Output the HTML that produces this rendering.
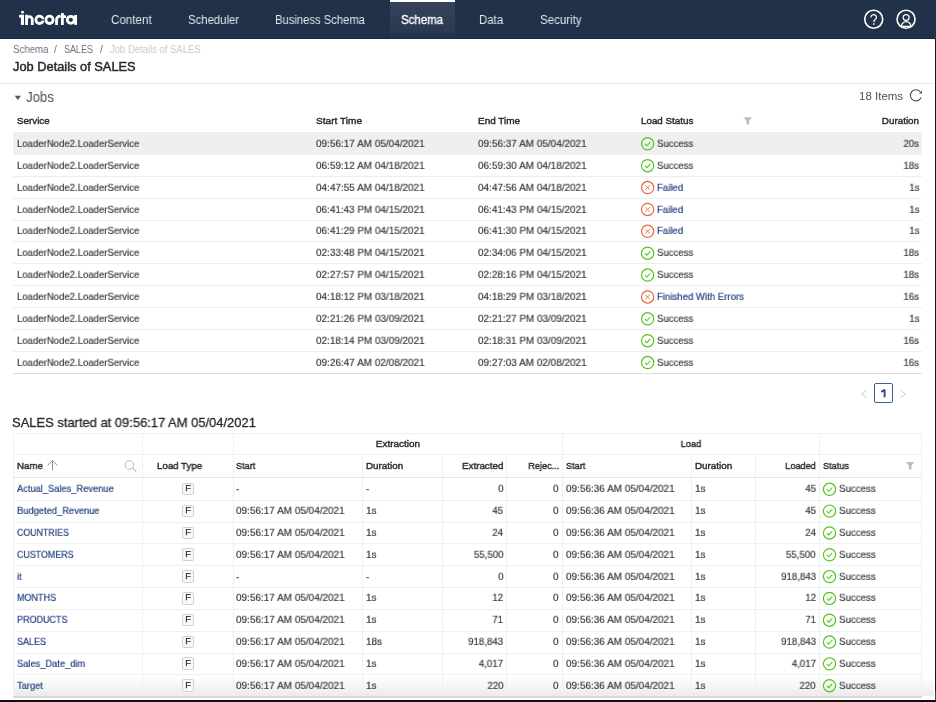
<!DOCTYPE html>
<html><head><meta charset="utf-8"><style>
html,body{margin:0;padding:0;}
body{width:936px;height:702px;position:relative;overflow:hidden;background:#fff;font-family:"Liberation Sans",sans-serif;}
.t{position:absolute;white-space:nowrap;will-change:transform;}
.r{position:absolute;}
</style></head><body>
<div class="r" style="left:0px;top:0px;width:936px;height:38.6px;background:#213149;"></div><div class="r" style="left:0px;top:37.8px;width:936px;height:0.8px;background:#15264a;"></div><div class="r" style="left:390px;top:0px;width:65px;height:38.6px;background:linear-gradient(#36435b,#2a3851 85%,#1c2b48);"></div><div class="r" style="left:390px;top:0px;width:65px;height:2px;background:#ffffff;"></div><svg class="r" style="left:0;top:0" width="90" height="38"><g fill="#fff"><circle cx="22.5" cy="12.15" r="1.45"/><rect x="19.1" y="14.8" width="4.9" height="2.8"/><rect x="20.9" y="14.8" width="3.1" height="10.1"/></g><g fill="none" stroke="#fff" stroke-width="2.8"><path d="M26.55 24.9 V14.8 M26.55 19.5 A2.85 2.85 0 0 1 32.25 19.5 V24.9"/><circle cx="39.5" cy="19.85" r="3.65"/><circle cx="49.5" cy="19.85" r="3.65"/><path d="M56.55 24.9 V19.7 A3.5 3.5 0 0 1 60.1 16.2"/><path d="M62.4 13 V24.9 M60.3 16.6 H66"/><circle cx="70.8" cy="19.85" r="3.55"/><path d="M75.6 15 V24.9"/></g><rect x="39.6" y="19.2" width="5.5" height="1.3" fill="#213149"/></svg><div class="t" style="top:14px;font-size:12px;line-height:12px;font-weight:400;color:#e1e5ec;left:110.82px;transform-origin:0 10px;transform:scale(0.9674,1.0000);">Content</div><div class="t" style="top:14px;font-size:12px;line-height:12px;font-weight:400;color:#e1e5ec;left:187.63px;transform-origin:0 10px;transform:scale(0.9461,1.0000);">Scheduler</div><div class="t" style="top:14px;font-size:12px;line-height:12px;font-weight:400;color:#e1e5ec;left:275.04px;transform-origin:0 10px;transform:scale(0.9362,1.0000);">Business Schema</div><div class="t" style="top:14px;font-size:12px;line-height:12px;font-weight:400;color:#ffffff;left:401.43px;transform-origin:0 10px;transform:scale(0.9572,1.0000);-webkit-text-stroke:0.35px #fff;">Schema</div><div class="t" style="top:14px;font-size:12px;line-height:12px;font-weight:400;color:#e1e5ec;left:479.43px;transform-origin:0 10px;transform:scale(0.9520,1.0000);">Data</div><div class="t" style="top:14px;font-size:12px;line-height:12px;font-weight:400;color:#e1e5ec;left:539.92px;transform-origin:0 10px;transform:scale(0.9606,1.0000);">Security</div><svg class="r" style="left:0;top:0" width="936" height="38"><g fill="none" stroke="#fff" stroke-width="1.6"><circle cx="873.7" cy="19.2" r="9.0"/><circle cx="906.05" cy="19.2" r="9.0"/></g><g fill="none" stroke="#fff" stroke-width="1.25"><path d="M870.9 17.4 A2.75 2.75 0 1 1 875.2 19.6 C874.2 20.2 873.8 20.7 873.8 22.1"/><circle cx="906.15" cy="17.5" r="2.95"/><path d="M901.4 26.4 A4.75 4.75 0 0 1 910.9 26.4 Z"/></g><rect x="873.0" y="23.3" width="1.6" height="1.5" fill="#fff"/></svg><div class="t" style="top:45px;font-size:10px;line-height:10px;font-weight:400;color:#687283;left:12.52px;transform-origin:0 8px;transform:scale(0.9695,1.0000);">Schema</div><div class="t" style="top:45px;font-size:10px;line-height:10px;font-weight:400;color:#687283;left:54.10px;transform-origin:0 8px;">/</div><div class="t" style="top:45px;font-size:10px;line-height:10px;font-weight:400;color:#687283;left:64.45px;transform-origin:0 8px;transform:scale(0.8960,1.0000);">SALES</div><div class="t" style="top:45px;font-size:10px;line-height:10px;font-weight:400;color:#687283;left:99.90px;transform-origin:0 8px;">/</div><div class="t" style="top:45px;font-size:10px;line-height:10px;font-weight:400;color:#c5c9d0;left:110.43px;transform-origin:0 8px;transform:scale(0.9481,1.0000);">Job Details of SALES</div><div class="t" style="top:61px;font-size:12.6px;line-height:12.6px;font-weight:400;color:#25282d;left:13.36px;transform-origin:0 10px;transform:scale(1.0189,1.0000);-webkit-text-stroke:0.45px #25282d;">Job Details of SALES</div><div class="r" style="left:0px;top:83px;width:934px;height:1px;background:#e8e9eb;"></div><svg class="r" style="left:0;top:0" width="936" height="702"><path d="M14.7 95.7 H21 L17.85 99.9 Z" fill="#50565f"/></svg><div class="t" style="top:91px;font-size:13.8px;line-height:13.8px;font-weight:400;color:#4c525b;left:25.54px;transform-origin:0 11px;transform:scale(0.9577,1.0000);">Jobs</div><div class="t" style="top:91px;font-size:11.5px;line-height:11.5px;font-weight:400;color:#4c525b;right:32.92px;transform-origin:100% 9px;">18 Items</div><svg class="r" style="left:0;top:0" width="936" height="702"><path d="M921.2 97.4 A5.6 5.6 0 1 1 920.2 91.6" fill="none" stroke="#4c525b" stroke-width="1.15"/><path d="M922.0 90.5 L922.0 93.6 L918.9 93.6 Z" fill="#4c525b"/></svg><div class="t" style="top:116px;font-size:9.8px;line-height:9.8px;font-weight:400;color:#26292e;left:16.61px;transform-origin:0 8px;transform:scale(0.9971,1.0000);-webkit-text-stroke:0.4px #26292e;">Service</div><div class="t" style="top:116px;font-size:9.8px;line-height:9.8px;font-weight:400;color:#26292e;left:315.90px;transform-origin:0 8px;transform:scale(1.0303,1.0000);-webkit-text-stroke:0.4px #26292e;">Start Time</div><div class="t" style="top:116px;font-size:9.8px;line-height:9.8px;font-weight:400;color:#26292e;left:478.30px;transform-origin:0 8px;transform:scale(1.0146,1.0000);-webkit-text-stroke:0.4px #26292e;">End Time</div><div class="t" style="top:116px;font-size:9.8px;line-height:9.8px;font-weight:400;color:#26292e;left:641.01px;transform-origin:0 8px;-webkit-text-stroke:0.4px #26292e;">Load Status</div><div class="t" style="top:116px;font-size:9.8px;line-height:9.8px;font-weight:400;color:#26292e;right:16.81px;transform-origin:100% 8px;transform:scale(1.0041,1.0000);-webkit-text-stroke:0.4px #26292e;">Duration</div><svg class="r" style="left:0;top:0" width="936" height="702"><path d="M743.5 117.3 H752 L749 120.9 V124.6 H746.5 V120.9 Z" fill="#bcbcbc"/></svg><div class="r" style="left:13px;top:132.3px;width:909px;height:22.6px;background:#eeeff1;"></div><div class="t" style="top:139px;font-size:10.0px;line-height:10.0px;font-weight:400;color:#363a40;left:17.12px;transform-origin:0 8px;transform:scale(0.9568,0.9100);-webkit-text-stroke:0.2px;">LoaderNode2.LoaderService</div><div class="t" style="top:139px;font-size:10.0px;line-height:10.0px;font-weight:400;color:#363a40;left:315.90px;transform-origin:0 8px;transform:scale(0.9964,0.9100);-webkit-text-stroke:0.2px;">09:56:17 AM 05/04/2021</div><div class="t" style="top:139px;font-size:10.0px;line-height:10.0px;font-weight:400;color:#363a40;left:478.30px;transform-origin:0 8px;transform:scale(0.9964,0.9100);-webkit-text-stroke:0.2px;">09:56:37 AM 05/04/2021</div><div class="t" style="top:139px;font-size:10.0px;line-height:10.0px;font-weight:400;color:#363a40;left:657.22px;transform-origin:0 8px;transform:scale(0.9600,0.9100);-webkit-text-stroke:0.2px;">Success</div><div class="t" style="top:139px;font-size:10.0px;line-height:10.0px;font-weight:400;color:#363a40;right:16.80px;transform-origin:100% 8px;transform:scale(0.9700,0.9100);-webkit-text-stroke:0.2px;">20s</div><div class="t" style="top:161px;font-size:10.0px;line-height:10.0px;font-weight:400;color:#363a40;left:17.12px;transform-origin:0 8px;transform:scale(0.9568,0.9100);-webkit-text-stroke:0.2px;">LoaderNode2.LoaderService</div><div class="t" style="top:161px;font-size:10.0px;line-height:10.0px;font-weight:400;color:#363a40;left:315.90px;transform-origin:0 8px;transform:scale(0.9964,0.9100);-webkit-text-stroke:0.2px;">06:59:12 AM 04/18/2021</div><div class="t" style="top:161px;font-size:10.0px;line-height:10.0px;font-weight:400;color:#363a40;left:478.30px;transform-origin:0 8px;transform:scale(0.9964,0.9100);-webkit-text-stroke:0.2px;">06:59:30 AM 04/18/2021</div><div class="t" style="top:161px;font-size:10.0px;line-height:10.0px;font-weight:400;color:#363a40;left:657.22px;transform-origin:0 8px;transform:scale(0.9600,0.9100);-webkit-text-stroke:0.2px;">Success</div><div class="t" style="top:161px;font-size:10.0px;line-height:10.0px;font-weight:400;color:#363a40;right:16.80px;transform-origin:100% 8px;transform:scale(0.9700,0.9100);-webkit-text-stroke:0.2px;">18s</div><div class="r" style="left:13px;top:175.85px;width:909px;height:1px;background:#ebedf0;"></div><div class="t" style="top:183px;font-size:10.0px;line-height:10.0px;font-weight:400;color:#363a40;left:17.12px;transform-origin:0 8px;transform:scale(0.9568,0.9100);-webkit-text-stroke:0.2px;">LoaderNode2.LoaderService</div><div class="t" style="top:183px;font-size:10.0px;line-height:10.0px;font-weight:400;color:#363a40;left:315.90px;transform-origin:0 8px;transform:scale(0.9964,0.9100);-webkit-text-stroke:0.2px;">04:47:55 AM 04/18/2021</div><div class="t" style="top:183px;font-size:10.0px;line-height:10.0px;font-weight:400;color:#363a40;left:478.30px;transform-origin:0 8px;transform:scale(0.9964,0.9100);-webkit-text-stroke:0.2px;">04:47:56 AM 04/18/2021</div><div class="t" style="top:183px;font-size:10.0px;line-height:10.0px;font-weight:400;color:#1f3d7c;left:657.22px;transform-origin:0 8px;transform:scale(0.9600,0.9100);-webkit-text-stroke:0.2px;">Failed</div><div class="t" style="top:183px;font-size:10.0px;line-height:10.0px;font-weight:400;color:#363a40;right:16.80px;transform-origin:100% 8px;transform:scale(0.9700,0.9100);-webkit-text-stroke:0.2px;">1s</div><div class="r" style="left:13px;top:197.725px;width:909px;height:1px;background:#ebedf0;"></div><div class="t" style="top:205px;font-size:10.0px;line-height:10.0px;font-weight:400;color:#363a40;left:17.12px;transform-origin:0 8px;transform:scale(0.9568,0.9100);-webkit-text-stroke:0.2px;">LoaderNode2.LoaderService</div><div class="t" style="top:205px;font-size:10.0px;line-height:10.0px;font-weight:400;color:#363a40;left:315.90px;transform-origin:0 8px;transform:scale(0.9914,0.9100);-webkit-text-stroke:0.2px;">06:41:43 PM 04/15/2021</div><div class="t" style="top:205px;font-size:10.0px;line-height:10.0px;font-weight:400;color:#363a40;left:478.30px;transform-origin:0 8px;transform:scale(0.9914,0.9100);-webkit-text-stroke:0.2px;">06:41:43 PM 04/15/2021</div><div class="t" style="top:205px;font-size:10.0px;line-height:10.0px;font-weight:400;color:#1f3d7c;left:657.22px;transform-origin:0 8px;transform:scale(0.9600,0.9100);-webkit-text-stroke:0.2px;">Failed</div><div class="t" style="top:205px;font-size:10.0px;line-height:10.0px;font-weight:400;color:#363a40;right:16.80px;transform-origin:100% 8px;transform:scale(0.9700,0.9100);-webkit-text-stroke:0.2px;">1s</div><div class="r" style="left:13px;top:219.6px;width:909px;height:1px;background:#ebedf0;"></div><div class="t" style="top:226px;font-size:10.0px;line-height:10.0px;font-weight:400;color:#363a40;left:17.12px;transform-origin:0 8px;transform:scale(0.9568,0.9100);-webkit-text-stroke:0.2px;">LoaderNode2.LoaderService</div><div class="t" style="top:226px;font-size:10.0px;line-height:10.0px;font-weight:400;color:#363a40;left:315.90px;transform-origin:0 8px;transform:scale(0.9914,0.9100);-webkit-text-stroke:0.2px;">06:41:29 PM 04/15/2021</div><div class="t" style="top:226px;font-size:10.0px;line-height:10.0px;font-weight:400;color:#363a40;left:478.30px;transform-origin:0 8px;transform:scale(0.9914,0.9100);-webkit-text-stroke:0.2px;">06:41:30 PM 04/15/2021</div><div class="t" style="top:226px;font-size:10.0px;line-height:10.0px;font-weight:400;color:#1f3d7c;left:657.22px;transform-origin:0 8px;transform:scale(0.9600,0.9100);-webkit-text-stroke:0.2px;">Failed</div><div class="t" style="top:226px;font-size:10.0px;line-height:10.0px;font-weight:400;color:#363a40;right:16.80px;transform-origin:100% 8px;transform:scale(0.9700,0.9100);-webkit-text-stroke:0.2px;">1s</div><div class="r" style="left:13px;top:241.475px;width:909px;height:1px;background:#ebedf0;"></div><div class="t" style="top:248px;font-size:10.0px;line-height:10.0px;font-weight:400;color:#363a40;left:17.12px;transform-origin:0 8px;transform:scale(0.9568,0.9100);-webkit-text-stroke:0.2px;">LoaderNode2.LoaderService</div><div class="t" style="top:248px;font-size:10.0px;line-height:10.0px;font-weight:400;color:#363a40;left:315.90px;transform-origin:0 8px;transform:scale(0.9914,0.9100);-webkit-text-stroke:0.2px;">02:33:48 PM 04/15/2021</div><div class="t" style="top:248px;font-size:10.0px;line-height:10.0px;font-weight:400;color:#363a40;left:478.30px;transform-origin:0 8px;transform:scale(0.9914,0.9100);-webkit-text-stroke:0.2px;">02:34:06 PM 04/15/2021</div><div class="t" style="top:248px;font-size:10.0px;line-height:10.0px;font-weight:400;color:#363a40;left:657.22px;transform-origin:0 8px;transform:scale(0.9600,0.9100);-webkit-text-stroke:0.2px;">Success</div><div class="t" style="top:248px;font-size:10.0px;line-height:10.0px;font-weight:400;color:#363a40;right:16.80px;transform-origin:100% 8px;transform:scale(0.9700,0.9100);-webkit-text-stroke:0.2px;">18s</div><div class="r" style="left:13px;top:263.35px;width:909px;height:1px;background:#ebedf0;"></div><div class="t" style="top:270px;font-size:10.0px;line-height:10.0px;font-weight:400;color:#363a40;left:17.12px;transform-origin:0 8px;transform:scale(0.9568,0.9100);-webkit-text-stroke:0.2px;">LoaderNode2.LoaderService</div><div class="t" style="top:270px;font-size:10.0px;line-height:10.0px;font-weight:400;color:#363a40;left:315.90px;transform-origin:0 8px;transform:scale(0.9914,0.9100);-webkit-text-stroke:0.2px;">02:27:57 PM 04/15/2021</div><div class="t" style="top:270px;font-size:10.0px;line-height:10.0px;font-weight:400;color:#363a40;left:478.30px;transform-origin:0 8px;transform:scale(0.9914,0.9100);-webkit-text-stroke:0.2px;">02:28:16 PM 04/15/2021</div><div class="t" style="top:270px;font-size:10.0px;line-height:10.0px;font-weight:400;color:#363a40;left:657.22px;transform-origin:0 8px;transform:scale(0.9600,0.9100);-webkit-text-stroke:0.2px;">Success</div><div class="t" style="top:270px;font-size:10.0px;line-height:10.0px;font-weight:400;color:#363a40;right:16.80px;transform-origin:100% 8px;transform:scale(0.9700,0.9100);-webkit-text-stroke:0.2px;">18s</div><div class="r" style="left:13px;top:285.225px;width:909px;height:1px;background:#ebedf0;"></div><div class="t" style="top:292px;font-size:10.0px;line-height:10.0px;font-weight:400;color:#363a40;left:17.12px;transform-origin:0 8px;transform:scale(0.9568,0.9100);-webkit-text-stroke:0.2px;">LoaderNode2.LoaderService</div><div class="t" style="top:292px;font-size:10.0px;line-height:10.0px;font-weight:400;color:#363a40;left:315.90px;transform-origin:0 8px;transform:scale(0.9914,0.9100);-webkit-text-stroke:0.2px;">04:18:12 PM 03/18/2021</div><div class="t" style="top:292px;font-size:10.0px;line-height:10.0px;font-weight:400;color:#363a40;left:478.30px;transform-origin:0 8px;transform:scale(0.9914,0.9100);-webkit-text-stroke:0.2px;">04:18:29 PM 03/18/2021</div><div class="t" style="top:292px;font-size:10.0px;line-height:10.0px;font-weight:400;color:#1f3d7c;left:657.22px;transform-origin:0 8px;transform:scale(0.9600,0.9100);-webkit-text-stroke:0.2px;">Finished With Errors</div><div class="t" style="top:292px;font-size:10.0px;line-height:10.0px;font-weight:400;color:#363a40;right:16.80px;transform-origin:100% 8px;transform:scale(0.9700,0.9100);-webkit-text-stroke:0.2px;">16s</div><div class="r" style="left:13px;top:307.1px;width:909px;height:1px;background:#ebedf0;"></div><div class="t" style="top:314px;font-size:10.0px;line-height:10.0px;font-weight:400;color:#363a40;left:17.12px;transform-origin:0 8px;transform:scale(0.9568,0.9100);-webkit-text-stroke:0.2px;">LoaderNode2.LoaderService</div><div class="t" style="top:314px;font-size:10.0px;line-height:10.0px;font-weight:400;color:#363a40;left:315.90px;transform-origin:0 8px;transform:scale(0.9914,0.9100);-webkit-text-stroke:0.2px;">02:21:26 PM 03/09/2021</div><div class="t" style="top:314px;font-size:10.0px;line-height:10.0px;font-weight:400;color:#363a40;left:478.30px;transform-origin:0 8px;transform:scale(0.9914,0.9100);-webkit-text-stroke:0.2px;">02:21:27 PM 03/09/2021</div><div class="t" style="top:314px;font-size:10.0px;line-height:10.0px;font-weight:400;color:#363a40;left:657.22px;transform-origin:0 8px;transform:scale(0.9600,0.9100);-webkit-text-stroke:0.2px;">Success</div><div class="t" style="top:314px;font-size:10.0px;line-height:10.0px;font-weight:400;color:#363a40;right:16.80px;transform-origin:100% 8px;transform:scale(0.9700,0.9100);-webkit-text-stroke:0.2px;">1s</div><div class="r" style="left:13px;top:328.975px;width:909px;height:1px;background:#ebedf0;"></div><div class="t" style="top:336px;font-size:10.0px;line-height:10.0px;font-weight:400;color:#363a40;left:17.12px;transform-origin:0 8px;transform:scale(0.9568,0.9100);-webkit-text-stroke:0.2px;">LoaderNode2.LoaderService</div><div class="t" style="top:336px;font-size:10.0px;line-height:10.0px;font-weight:400;color:#363a40;left:315.90px;transform-origin:0 8px;transform:scale(0.9914,0.9100);-webkit-text-stroke:0.2px;">02:18:14 PM 03/09/2021</div><div class="t" style="top:336px;font-size:10.0px;line-height:10.0px;font-weight:400;color:#363a40;left:478.30px;transform-origin:0 8px;transform:scale(0.9914,0.9100);-webkit-text-stroke:0.2px;">02:18:31 PM 03/09/2021</div><div class="t" style="top:336px;font-size:10.0px;line-height:10.0px;font-weight:400;color:#363a40;left:657.22px;transform-origin:0 8px;transform:scale(0.9600,0.9100);-webkit-text-stroke:0.2px;">Success</div><div class="t" style="top:336px;font-size:10.0px;line-height:10.0px;font-weight:400;color:#363a40;right:16.80px;transform-origin:100% 8px;transform:scale(0.9700,0.9100);-webkit-text-stroke:0.2px;">16s</div><div class="r" style="left:13px;top:350.85px;width:909px;height:1px;background:#ebedf0;"></div><div class="t" style="top:358px;font-size:10.0px;line-height:10.0px;font-weight:400;color:#363a40;left:17.12px;transform-origin:0 8px;transform:scale(0.9568,0.9100);-webkit-text-stroke:0.2px;">LoaderNode2.LoaderService</div><div class="t" style="top:358px;font-size:10.0px;line-height:10.0px;font-weight:400;color:#363a40;left:315.90px;transform-origin:0 8px;transform:scale(0.9964,0.9100);-webkit-text-stroke:0.2px;">09:26:47 AM 02/08/2021</div><div class="t" style="top:358px;font-size:10.0px;line-height:10.0px;font-weight:400;color:#363a40;left:478.30px;transform-origin:0 8px;transform:scale(0.9964,0.9100);-webkit-text-stroke:0.2px;">09:27:03 AM 02/08/2021</div><div class="t" style="top:358px;font-size:10.0px;line-height:10.0px;font-weight:400;color:#363a40;left:657.22px;transform-origin:0 8px;transform:scale(0.9600,0.9100);-webkit-text-stroke:0.2px;">Success</div><div class="t" style="top:358px;font-size:10.0px;line-height:10.0px;font-weight:400;color:#363a40;right:16.80px;transform-origin:100% 8px;transform:scale(0.9700,0.9100);-webkit-text-stroke:0.2px;">16s</div><div class="r" style="left:13px;top:372.625px;width:909px;height:1.5px;background:#dfdcd6;"></div><svg class="r" style="left:0;top:0" width="936" height="702"><circle cx="647.60" cy="143.80" r="6.1" fill="none" stroke="#52c41a" stroke-width="1.2"/><path d="M644.90 143.90 L646.80 145.80 L650.40 142.00" fill="none" stroke="#52c41a" stroke-width="1.05"/><circle cx="647.60" cy="165.68" r="6.1" fill="none" stroke="#52c41a" stroke-width="1.2"/><path d="M644.90 165.78 L646.80 167.68 L650.40 163.88" fill="none" stroke="#52c41a" stroke-width="1.05"/><circle cx="647.60" cy="187.55" r="6.1" fill="none" stroke="#e8683d" stroke-width="1.2"/><path d="M645.40 185.35 L649.80 189.75 M649.80 185.35 L645.40 189.75" fill="none" stroke="#e8683d" stroke-width="0.9"/><circle cx="647.60" cy="209.43" r="6.1" fill="none" stroke="#e8683d" stroke-width="1.2"/><path d="M645.40 207.23 L649.80 211.62 M649.80 207.23 L645.40 211.62" fill="none" stroke="#e8683d" stroke-width="0.9"/><circle cx="647.60" cy="231.30" r="6.1" fill="none" stroke="#e8683d" stroke-width="1.2"/><path d="M645.40 229.10 L649.80 233.50 M649.80 229.10 L645.40 233.50" fill="none" stroke="#e8683d" stroke-width="0.9"/><circle cx="647.60" cy="253.18" r="6.1" fill="none" stroke="#52c41a" stroke-width="1.2"/><path d="M644.90 253.28 L646.80 255.18 L650.40 251.38" fill="none" stroke="#52c41a" stroke-width="1.05"/><circle cx="647.60" cy="275.05" r="6.1" fill="none" stroke="#52c41a" stroke-width="1.2"/><path d="M644.90 275.15 L646.80 277.05 L650.40 273.25" fill="none" stroke="#52c41a" stroke-width="1.05"/><circle cx="647.60" cy="296.93" r="6.1" fill="none" stroke="#e8683d" stroke-width="1.2"/><path d="M645.40 294.73 L649.80 299.12 M649.80 294.73 L645.40 299.12" fill="none" stroke="#e8683d" stroke-width="0.9"/><circle cx="647.60" cy="318.80" r="6.1" fill="none" stroke="#52c41a" stroke-width="1.2"/><path d="M644.90 318.90 L646.80 320.80 L650.40 317.00" fill="none" stroke="#52c41a" stroke-width="1.05"/><circle cx="647.60" cy="340.68" r="6.1" fill="none" stroke="#52c41a" stroke-width="1.2"/><path d="M644.90 340.78 L646.80 342.68 L650.40 338.88" fill="none" stroke="#52c41a" stroke-width="1.05"/><circle cx="647.60" cy="362.55" r="6.1" fill="none" stroke="#52c41a" stroke-width="1.2"/><path d="M644.90 362.65 L646.80 364.55 L650.40 360.75" fill="none" stroke="#52c41a" stroke-width="1.05"/></svg><div class="r" style="left:874px;top:383px;width:19.3px;height:19.8px;background:transparent;border:1px solid #3d5f98;border-radius:2px;box-sizing:border-box;"></div><svg class="r" style="left:0;top:0" width="936" height="702"><path d="M881.3 391.9 L884.6 389.7 V397.3" fill="none" stroke="#2b4c88" stroke-width="1.9" stroke-linejoin="bevel"/><path d="M866.6 390.2 L861.6 393.9 L866.6 397.6" fill="none" stroke="#c8c8c8" stroke-width="1"/><path d="M900.4 390.2 L905.4 393.9 L900.4 397.6" fill="none" stroke="#c8c8c8" stroke-width="1"/></svg><div class="t" style="top:416px;font-size:13px;line-height:13px;font-weight:400;color:#25282d;left:12.35px;transform-origin:0 11px;transform:scale(0.9954,1.0000);-webkit-text-stroke:0.3px #25282d;">SALES started at 09:56:17 AM 05/04/2021</div><div class="r" style="left:14px;top:675.36px;width:919.5px;height:20.93999999999994px;background:linear-gradient(#ffffff 10%,#ebebeb);"></div><div class="r" style="left:13px;top:432.6px;width:909px;height:1px;background:#eff0f2;"></div><div class="r" style="left:13px;top:432.6px;width:1px;height:264.19999999999993px;background:#eff0f2;"></div><div class="r" style="left:921px;top:432.6px;width:1px;height:264.19999999999993px;background:#eff0f2;"></div><div class="r" style="left:13px;top:454.2px;width:909px;height:1px;background:#eff0f2;"></div><div class="r" style="left:13px;top:476.79999999999995px;width:909px;height:1.6px;background:#e3e5e8;"></div><div class="r" style="left:142.4px;top:432.6px;width:1px;height:264.19999999999993px;background:#eff0f2;"></div><div class="r" style="left:232.8px;top:432.6px;width:1px;height:264.19999999999993px;background:#eff0f2;"></div><div class="r" style="left:362.2px;top:454.2px;width:1px;height:242.59999999999997px;background:#eff0f2;"></div><div class="r" style="left:442.3px;top:454.2px;width:1px;height:242.59999999999997px;background:#eff0f2;"></div><div class="r" style="left:506px;top:454.2px;width:1px;height:242.59999999999997px;background:#eff0f2;"></div><div class="r" style="left:562.3px;top:432.6px;width:1px;height:264.19999999999993px;background:#eff0f2;"></div><div class="r" style="left:691.4px;top:454.2px;width:1px;height:242.59999999999997px;background:#eff0f2;"></div><div class="r" style="left:755.3px;top:454.2px;width:1px;height:242.59999999999997px;background:#eff0f2;"></div><div class="r" style="left:819px;top:432.6px;width:1px;height:264.19999999999993px;background:#eff0f2;"></div><div class="t" style="top:439px;font-size:9.8px;line-height:9.8px;font-weight:400;color:#26292e;left:197.70px;width:400px;text-align:center;transform-origin:50% 8px;transform:scale(1.0168,1.0000);-webkit-text-stroke:0.4px #26292e;">Extraction</div><div class="t" style="top:439px;font-size:9.8px;line-height:9.8px;font-weight:400;color:#26292e;left:490.90px;width:400px;text-align:center;transform-origin:50% 8px;transform:scale(0.9300,1.0000);-webkit-text-stroke:0.4px #26292e;">Load</div><div class="t" style="top:461px;font-size:9.8px;line-height:9.8px;font-weight:400;color:#26292e;left:16.92px;transform-origin:0 8px;transform:scale(0.9857,1.0000);-webkit-text-stroke:0.4px #26292e;">Name</div><div class="t" style="top:461px;font-size:9.8px;line-height:9.8px;font-weight:400;color:#26292e;left:157.12px;transform-origin:0 8px;transform:scale(0.9885,1.0000);-webkit-text-stroke:0.4px #26292e;">Load Type</div><div class="t" style="top:461px;font-size:9.8px;line-height:9.8px;font-weight:400;color:#26292e;left:236.04px;transform-origin:0 8px;transform:scale(0.9300,1.0000);-webkit-text-stroke:0.4px #26292e;">Start</div><div class="t" style="top:461px;font-size:9.8px;line-height:9.8px;font-weight:400;color:#26292e;left:365.51px;transform-origin:0 8px;transform:scale(1.0041,1.0000);-webkit-text-stroke:0.4px #26292e;">Duration</div><div class="t" style="top:461px;font-size:9.8px;line-height:9.8px;font-weight:400;color:#26292e;right:432.81px;transform-origin:100% 8px;transform:scale(0.9973,1.0000);-webkit-text-stroke:0.4px #26292e;">Extracted</div><div class="t" style="top:461px;font-size:9.8px;line-height:9.8px;font-weight:400;color:#26292e;right:377.01px;transform-origin:100% 8px;transform:scale(0.9300,1.0000);-webkit-text-stroke:0.4px #26292e;">Rejec...</div><div class="t" style="top:461px;font-size:9.8px;line-height:9.8px;font-weight:400;color:#26292e;left:565.94px;transform-origin:0 8px;transform:scale(0.9300,1.0000);-webkit-text-stroke:0.4px #26292e;">Start</div><div class="t" style="top:461px;font-size:9.8px;line-height:9.8px;font-weight:400;color:#26292e;left:694.91px;transform-origin:0 8px;transform:scale(1.0041,1.0000);-webkit-text-stroke:0.4px #26292e;">Duration</div><div class="t" style="top:461px;font-size:9.8px;line-height:9.8px;font-weight:400;color:#26292e;right:120.01px;transform-origin:100% 8px;transform:scale(0.9300,1.0000);-webkit-text-stroke:0.4px #26292e;">Loaded</div><div class="t" style="top:461px;font-size:9.8px;line-height:9.8px;font-weight:400;color:#26292e;left:822.54px;transform-origin:0 8px;transform:scale(0.9300,1.0000);-webkit-text-stroke:0.4px #26292e;">Status</div><svg class="r" style="left:0;top:0" width="936" height="702"><path d="M47.8 465.4 L52.5 460.6 L57.2 465.4 M52.5 460.8 V470.4" fill="none" stroke="#8d9299" stroke-width="1"/><circle cx="129.4" cy="465.0" r="4.3" fill="none" stroke="#b5b9bf" stroke-width="1"/><path d="M132.6 468.2 L136.3 471.9" stroke="#b5b9bf" stroke-width="1.1"/><path d="M906 462.1 H914.4 L911.4 465.8 V469.5 H909 V465.8 Z" fill="#bcbcbc"/></svg><div class="t" style="top:484px;font-size:10.0px;line-height:10.0px;font-weight:400;color:#1f3d7c;left:16.93px;transform-origin:0 8px;transform:scale(0.9304,0.9100);-webkit-text-stroke:0.2px;">Actual_Sales_Revenue</div><div class="r" style="left:181.8px;top:482.90000000000003px;width:12.6px;height:12.6px;background:#f9f9f9;border:1px solid #cfd1d4;border-radius:2px;box-sizing:border-box;"></div><div class="t" style="top:484px;font-size:9.3px;line-height:9.3px;font-weight:400;color:#2a2d31;left:-12.00px;width:400px;text-align:center;transform-origin:50% 7px;-webkit-text-stroke:0.25px #2a2d31;">F</div><div class="t" style="top:484px;font-size:10.0px;line-height:10.0px;font-weight:400;color:#363a40;left:236.00px;transform-origin:0 8px;transform:scale(1.0000,0.9100);-webkit-text-stroke:0.2px;">-</div><div class="t" style="top:484px;font-size:10.0px;line-height:10.0px;font-weight:400;color:#363a40;left:365.50px;transform-origin:0 8px;transform:scale(1.0000,0.9100);-webkit-text-stroke:0.2px;">-</div><div class="t" style="top:484px;font-size:10.0px;line-height:10.0px;font-weight:400;color:#363a40;right:432.80px;transform-origin:100% 8px;transform:scale(0.9700,0.9100);-webkit-text-stroke:0.2px;">0</div><div class="t" style="top:484px;font-size:10.0px;line-height:10.0px;font-weight:400;color:#363a40;right:377.00px;transform-origin:100% 8px;transform:scale(1.0000,0.9100);-webkit-text-stroke:0.2px;">0</div><div class="t" style="top:484px;font-size:10.0px;line-height:10.0px;font-weight:400;color:#363a40;left:565.90px;transform-origin:0 8px;transform:scale(0.9964,0.9100);-webkit-text-stroke:0.2px;">09:56:36 AM 05/04/2021</div><div class="t" style="top:484px;font-size:10.0px;line-height:10.0px;font-weight:400;color:#363a40;left:694.90px;transform-origin:0 8px;transform:scale(1.0000,0.9100);-webkit-text-stroke:0.2px;">1s</div><div class="t" style="top:484px;font-size:10.0px;line-height:10.0px;font-weight:400;color:#363a40;right:120.00px;transform-origin:100% 8px;transform:scale(0.9700,0.9100);-webkit-text-stroke:0.2px;">45</div><div class="t" style="top:484px;font-size:10.0px;line-height:10.0px;font-weight:400;color:#363a40;left:838.71px;transform-origin:0 8px;transform:scale(0.9729,0.9100);-webkit-text-stroke:0.2px;">Success</div><div class="r" style="left:13px;top:499.8px;width:909px;height:1px;background:#eff0f2;"></div><div class="t" style="top:506px;font-size:10.0px;line-height:10.0px;font-weight:400;color:#1f3d7c;left:16.93px;transform-origin:0 8px;transform:scale(0.9334,0.9100);-webkit-text-stroke:0.2px;">Budgeted_Revenue</div><div class="r" style="left:181.8px;top:504.72px;width:12.6px;height:12.6px;background:#f9f9f9;border:1px solid #cfd1d4;border-radius:2px;box-sizing:border-box;"></div><div class="t" style="top:506px;font-size:9.3px;line-height:9.3px;font-weight:400;color:#2a2d31;left:-12.00px;width:400px;text-align:center;transform-origin:50% 7px;-webkit-text-stroke:0.25px #2a2d31;">F</div><div class="t" style="top:506px;font-size:10.0px;line-height:10.0px;font-weight:400;color:#363a40;left:236.00px;transform-origin:0 8px;transform:scale(0.9964,0.9100);-webkit-text-stroke:0.2px;">09:56:17 AM 05/04/2021</div><div class="t" style="top:506px;font-size:10.0px;line-height:10.0px;font-weight:400;color:#363a40;left:365.50px;transform-origin:0 8px;transform:scale(1.0000,0.9100);-webkit-text-stroke:0.2px;">1s</div><div class="t" style="top:506px;font-size:10.0px;line-height:10.0px;font-weight:400;color:#363a40;right:432.80px;transform-origin:100% 8px;transform:scale(0.9700,0.9100);-webkit-text-stroke:0.2px;">45</div><div class="t" style="top:506px;font-size:10.0px;line-height:10.0px;font-weight:400;color:#363a40;right:377.00px;transform-origin:100% 8px;transform:scale(1.0000,0.9100);-webkit-text-stroke:0.2px;">0</div><div class="t" style="top:506px;font-size:10.0px;line-height:10.0px;font-weight:400;color:#363a40;left:565.90px;transform-origin:0 8px;transform:scale(0.9964,0.9100);-webkit-text-stroke:0.2px;">09:56:36 AM 05/04/2021</div><div class="t" style="top:506px;font-size:10.0px;line-height:10.0px;font-weight:400;color:#363a40;left:694.90px;transform-origin:0 8px;transform:scale(1.0000,0.9100);-webkit-text-stroke:0.2px;">1s</div><div class="t" style="top:506px;font-size:10.0px;line-height:10.0px;font-weight:400;color:#363a40;right:120.00px;transform-origin:100% 8px;transform:scale(0.9700,0.9100);-webkit-text-stroke:0.2px;">45</div><div class="t" style="top:506px;font-size:10.0px;line-height:10.0px;font-weight:400;color:#363a40;left:838.71px;transform-origin:0 8px;transform:scale(0.9729,0.9100);-webkit-text-stroke:0.2px;">Success</div><div class="r" style="left:13px;top:521.62px;width:909px;height:1px;background:#eff0f2;"></div><div class="t" style="top:528px;font-size:10.0px;line-height:10.0px;font-weight:400;color:#1f3d7c;left:16.96px;transform-origin:0 8px;transform:scale(0.8807,0.9100);-webkit-text-stroke:0.2px;">COUNTRIES</div><div class="r" style="left:181.8px;top:526.5400000000001px;width:12.6px;height:12.6px;background:#f9f9f9;border:1px solid #cfd1d4;border-radius:2px;box-sizing:border-box;"></div><div class="t" style="top:528px;font-size:9.3px;line-height:9.3px;font-weight:400;color:#2a2d31;left:-12.00px;width:400px;text-align:center;transform-origin:50% 7px;-webkit-text-stroke:0.25px #2a2d31;">F</div><div class="t" style="top:528px;font-size:10.0px;line-height:10.0px;font-weight:400;color:#363a40;left:236.00px;transform-origin:0 8px;transform:scale(0.9964,0.9100);-webkit-text-stroke:0.2px;">09:56:17 AM 05/04/2021</div><div class="t" style="top:528px;font-size:10.0px;line-height:10.0px;font-weight:400;color:#363a40;left:365.50px;transform-origin:0 8px;transform:scale(1.0000,0.9100);-webkit-text-stroke:0.2px;">1s</div><div class="t" style="top:528px;font-size:10.0px;line-height:10.0px;font-weight:400;color:#363a40;right:432.80px;transform-origin:100% 8px;transform:scale(0.9700,0.9100);-webkit-text-stroke:0.2px;">24</div><div class="t" style="top:528px;font-size:10.0px;line-height:10.0px;font-weight:400;color:#363a40;right:377.00px;transform-origin:100% 8px;transform:scale(1.0000,0.9100);-webkit-text-stroke:0.2px;">0</div><div class="t" style="top:528px;font-size:10.0px;line-height:10.0px;font-weight:400;color:#363a40;left:565.90px;transform-origin:0 8px;transform:scale(0.9964,0.9100);-webkit-text-stroke:0.2px;">09:56:36 AM 05/04/2021</div><div class="t" style="top:528px;font-size:10.0px;line-height:10.0px;font-weight:400;color:#363a40;left:694.90px;transform-origin:0 8px;transform:scale(1.0000,0.9100);-webkit-text-stroke:0.2px;">1s</div><div class="t" style="top:528px;font-size:10.0px;line-height:10.0px;font-weight:400;color:#363a40;right:120.00px;transform-origin:100% 8px;transform:scale(0.9700,0.9100);-webkit-text-stroke:0.2px;">24</div><div class="t" style="top:528px;font-size:10.0px;line-height:10.0px;font-weight:400;color:#363a40;left:838.71px;transform-origin:0 8px;transform:scale(0.9729,0.9100);-webkit-text-stroke:0.2px;">Success</div><div class="r" style="left:13px;top:543.44px;width:909px;height:1px;background:#eff0f2;"></div><div class="t" style="top:550px;font-size:10.0px;line-height:10.0px;font-weight:400;color:#1f3d7c;left:16.96px;transform-origin:0 8px;transform:scale(0.8881,0.9100);-webkit-text-stroke:0.2px;">CUSTOMERS</div><div class="r" style="left:181.8px;top:548.36px;width:12.6px;height:12.6px;background:#f9f9f9;border:1px solid #cfd1d4;border-radius:2px;box-sizing:border-box;"></div><div class="t" style="top:550px;font-size:9.3px;line-height:9.3px;font-weight:400;color:#2a2d31;left:-12.00px;width:400px;text-align:center;transform-origin:50% 7px;-webkit-text-stroke:0.25px #2a2d31;">F</div><div class="t" style="top:550px;font-size:10.0px;line-height:10.0px;font-weight:400;color:#363a40;left:236.00px;transform-origin:0 8px;transform:scale(0.9964,0.9100);-webkit-text-stroke:0.2px;">09:56:17 AM 05/04/2021</div><div class="t" style="top:550px;font-size:10.0px;line-height:10.0px;font-weight:400;color:#363a40;left:365.50px;transform-origin:0 8px;transform:scale(1.0000,0.9100);-webkit-text-stroke:0.2px;">1s</div><div class="t" style="top:550px;font-size:10.0px;line-height:10.0px;font-weight:400;color:#363a40;right:432.80px;transform-origin:100% 8px;transform:scale(0.9700,0.9100);-webkit-text-stroke:0.2px;">55,500</div><div class="t" style="top:550px;font-size:10.0px;line-height:10.0px;font-weight:400;color:#363a40;right:377.00px;transform-origin:100% 8px;transform:scale(1.0000,0.9100);-webkit-text-stroke:0.2px;">0</div><div class="t" style="top:550px;font-size:10.0px;line-height:10.0px;font-weight:400;color:#363a40;left:565.90px;transform-origin:0 8px;transform:scale(0.9964,0.9100);-webkit-text-stroke:0.2px;">09:56:36 AM 05/04/2021</div><div class="t" style="top:550px;font-size:10.0px;line-height:10.0px;font-weight:400;color:#363a40;left:694.90px;transform-origin:0 8px;transform:scale(1.0000,0.9100);-webkit-text-stroke:0.2px;">1s</div><div class="t" style="top:550px;font-size:10.0px;line-height:10.0px;font-weight:400;color:#363a40;right:120.00px;transform-origin:100% 8px;transform:scale(0.9700,0.9100);-webkit-text-stroke:0.2px;">55,500</div><div class="t" style="top:550px;font-size:10.0px;line-height:10.0px;font-weight:400;color:#363a40;left:838.71px;transform-origin:0 8px;transform:scale(0.9729,0.9100);-webkit-text-stroke:0.2px;">Success</div><div class="r" style="left:13px;top:565.26px;width:909px;height:1px;background:#eff0f2;"></div><div class="t" style="top:572px;font-size:10.0px;line-height:10.0px;font-weight:400;color:#1f3d7c;left:16.93px;transform-origin:0 8px;transform:scale(0.9300,0.9100);-webkit-text-stroke:0.2px;">it</div><div class="r" style="left:181.8px;top:570.1800000000001px;width:12.6px;height:12.6px;background:#f9f9f9;border:1px solid #cfd1d4;border-radius:2px;box-sizing:border-box;"></div><div class="t" style="top:572px;font-size:9.3px;line-height:9.3px;font-weight:400;color:#2a2d31;left:-12.00px;width:400px;text-align:center;transform-origin:50% 7px;-webkit-text-stroke:0.25px #2a2d31;">F</div><div class="t" style="top:572px;font-size:10.0px;line-height:10.0px;font-weight:400;color:#363a40;left:236.00px;transform-origin:0 8px;transform:scale(1.0000,0.9100);-webkit-text-stroke:0.2px;">-</div><div class="t" style="top:572px;font-size:10.0px;line-height:10.0px;font-weight:400;color:#363a40;left:365.50px;transform-origin:0 8px;transform:scale(1.0000,0.9100);-webkit-text-stroke:0.2px;">-</div><div class="t" style="top:572px;font-size:10.0px;line-height:10.0px;font-weight:400;color:#363a40;right:432.80px;transform-origin:100% 8px;transform:scale(0.9700,0.9100);-webkit-text-stroke:0.2px;">0</div><div class="t" style="top:572px;font-size:10.0px;line-height:10.0px;font-weight:400;color:#363a40;right:377.00px;transform-origin:100% 8px;transform:scale(1.0000,0.9100);-webkit-text-stroke:0.2px;">0</div><div class="t" style="top:572px;font-size:10.0px;line-height:10.0px;font-weight:400;color:#363a40;left:565.90px;transform-origin:0 8px;transform:scale(0.9964,0.9100);-webkit-text-stroke:0.2px;">09:56:36 AM 05/04/2021</div><div class="t" style="top:572px;font-size:10.0px;line-height:10.0px;font-weight:400;color:#363a40;left:694.90px;transform-origin:0 8px;transform:scale(1.0000,0.9100);-webkit-text-stroke:0.2px;">1s</div><div class="t" style="top:572px;font-size:10.0px;line-height:10.0px;font-weight:400;color:#363a40;right:120.00px;transform-origin:100% 8px;transform:scale(0.9700,0.9100);-webkit-text-stroke:0.2px;">918,843</div><div class="t" style="top:572px;font-size:10.0px;line-height:10.0px;font-weight:400;color:#363a40;left:838.71px;transform-origin:0 8px;transform:scale(0.9729,0.9100);-webkit-text-stroke:0.2px;">Success</div><div class="r" style="left:13px;top:587.08px;width:909px;height:1px;background:#eff0f2;"></div><div class="t" style="top:593px;font-size:10.0px;line-height:10.0px;font-weight:400;color:#1f3d7c;left:16.95px;transform-origin:0 8px;transform:scale(0.9000,0.9100);-webkit-text-stroke:0.2px;">MONTHS</div><div class="r" style="left:181.8px;top:592.0px;width:12.6px;height:12.6px;background:#f9f9f9;border:1px solid #cfd1d4;border-radius:2px;box-sizing:border-box;"></div><div class="t" style="top:593px;font-size:9.3px;line-height:9.3px;font-weight:400;color:#2a2d31;left:-12.00px;width:400px;text-align:center;transform-origin:50% 7px;-webkit-text-stroke:0.25px #2a2d31;">F</div><div class="t" style="top:593px;font-size:10.0px;line-height:10.0px;font-weight:400;color:#363a40;left:236.00px;transform-origin:0 8px;transform:scale(0.9964,0.9100);-webkit-text-stroke:0.2px;">09:56:17 AM 05/04/2021</div><div class="t" style="top:593px;font-size:10.0px;line-height:10.0px;font-weight:400;color:#363a40;left:365.50px;transform-origin:0 8px;transform:scale(1.0000,0.9100);-webkit-text-stroke:0.2px;">1s</div><div class="t" style="top:593px;font-size:10.0px;line-height:10.0px;font-weight:400;color:#363a40;right:432.80px;transform-origin:100% 8px;transform:scale(0.9700,0.9100);-webkit-text-stroke:0.2px;">12</div><div class="t" style="top:593px;font-size:10.0px;line-height:10.0px;font-weight:400;color:#363a40;right:377.00px;transform-origin:100% 8px;transform:scale(1.0000,0.9100);-webkit-text-stroke:0.2px;">0</div><div class="t" style="top:593px;font-size:10.0px;line-height:10.0px;font-weight:400;color:#363a40;left:565.90px;transform-origin:0 8px;transform:scale(0.9964,0.9100);-webkit-text-stroke:0.2px;">09:56:36 AM 05/04/2021</div><div class="t" style="top:593px;font-size:10.0px;line-height:10.0px;font-weight:400;color:#363a40;left:694.90px;transform-origin:0 8px;transform:scale(1.0000,0.9100);-webkit-text-stroke:0.2px;">1s</div><div class="t" style="top:593px;font-size:10.0px;line-height:10.0px;font-weight:400;color:#363a40;right:120.00px;transform-origin:100% 8px;transform:scale(0.9700,0.9100);-webkit-text-stroke:0.2px;">12</div><div class="t" style="top:593px;font-size:10.0px;line-height:10.0px;font-weight:400;color:#363a40;left:838.71px;transform-origin:0 8px;transform:scale(0.9729,0.9100);-webkit-text-stroke:0.2px;">Success</div><div class="r" style="left:13px;top:608.9000000000001px;width:909px;height:1px;background:#eff0f2;"></div><div class="t" style="top:615px;font-size:10.0px;line-height:10.0px;font-weight:400;color:#1f3d7c;left:16.95px;transform-origin:0 8px;transform:scale(0.9000,0.9100);-webkit-text-stroke:0.2px;">PRODUCTS</div><div class="r" style="left:181.8px;top:613.82px;width:12.6px;height:12.6px;background:#f9f9f9;border:1px solid #cfd1d4;border-radius:2px;box-sizing:border-box;"></div><div class="t" style="top:615px;font-size:9.3px;line-height:9.3px;font-weight:400;color:#2a2d31;left:-12.00px;width:400px;text-align:center;transform-origin:50% 7px;-webkit-text-stroke:0.25px #2a2d31;">F</div><div class="t" style="top:615px;font-size:10.0px;line-height:10.0px;font-weight:400;color:#363a40;left:236.00px;transform-origin:0 8px;transform:scale(0.9964,0.9100);-webkit-text-stroke:0.2px;">09:56:17 AM 05/04/2021</div><div class="t" style="top:615px;font-size:10.0px;line-height:10.0px;font-weight:400;color:#363a40;left:365.50px;transform-origin:0 8px;transform:scale(1.0000,0.9100);-webkit-text-stroke:0.2px;">1s</div><div class="t" style="top:615px;font-size:10.0px;line-height:10.0px;font-weight:400;color:#363a40;right:432.80px;transform-origin:100% 8px;transform:scale(0.9700,0.9100);-webkit-text-stroke:0.2px;">71</div><div class="t" style="top:615px;font-size:10.0px;line-height:10.0px;font-weight:400;color:#363a40;right:377.00px;transform-origin:100% 8px;transform:scale(1.0000,0.9100);-webkit-text-stroke:0.2px;">0</div><div class="t" style="top:615px;font-size:10.0px;line-height:10.0px;font-weight:400;color:#363a40;left:565.90px;transform-origin:0 8px;transform:scale(0.9964,0.9100);-webkit-text-stroke:0.2px;">09:56:36 AM 05/04/2021</div><div class="t" style="top:615px;font-size:10.0px;line-height:10.0px;font-weight:400;color:#363a40;left:694.90px;transform-origin:0 8px;transform:scale(1.0000,0.9100);-webkit-text-stroke:0.2px;">1s</div><div class="t" style="top:615px;font-size:10.0px;line-height:10.0px;font-weight:400;color:#363a40;right:120.00px;transform-origin:100% 8px;transform:scale(0.9700,0.9100);-webkit-text-stroke:0.2px;">71</div><div class="t" style="top:615px;font-size:10.0px;line-height:10.0px;font-weight:400;color:#363a40;left:838.71px;transform-origin:0 8px;transform:scale(0.9729,0.9100);-webkit-text-stroke:0.2px;">Success</div><div class="r" style="left:13px;top:630.72px;width:909px;height:1px;background:#eff0f2;"></div><div class="t" style="top:637px;font-size:10.0px;line-height:10.0px;font-weight:400;color:#1f3d7c;left:16.95px;transform-origin:0 8px;transform:scale(0.9000,0.9100);-webkit-text-stroke:0.2px;">SALES</div><div class="r" style="left:181.8px;top:635.64px;width:12.6px;height:12.6px;background:#f9f9f9;border:1px solid #cfd1d4;border-radius:2px;box-sizing:border-box;"></div><div class="t" style="top:637px;font-size:9.3px;line-height:9.3px;font-weight:400;color:#2a2d31;left:-12.00px;width:400px;text-align:center;transform-origin:50% 7px;-webkit-text-stroke:0.25px #2a2d31;">F</div><div class="t" style="top:637px;font-size:10.0px;line-height:10.0px;font-weight:400;color:#363a40;left:236.00px;transform-origin:0 8px;transform:scale(0.9964,0.9100);-webkit-text-stroke:0.2px;">09:56:17 AM 05/04/2021</div><div class="t" style="top:637px;font-size:10.0px;line-height:10.0px;font-weight:400;color:#363a40;left:365.50px;transform-origin:0 8px;transform:scale(1.0000,0.9100);-webkit-text-stroke:0.2px;">18s</div><div class="t" style="top:637px;font-size:10.0px;line-height:10.0px;font-weight:400;color:#363a40;right:432.80px;transform-origin:100% 8px;transform:scale(0.9700,0.9100);-webkit-text-stroke:0.2px;">918,843</div><div class="t" style="top:637px;font-size:10.0px;line-height:10.0px;font-weight:400;color:#363a40;right:377.00px;transform-origin:100% 8px;transform:scale(1.0000,0.9100);-webkit-text-stroke:0.2px;">0</div><div class="t" style="top:637px;font-size:10.0px;line-height:10.0px;font-weight:400;color:#363a40;left:565.90px;transform-origin:0 8px;transform:scale(0.9964,0.9100);-webkit-text-stroke:0.2px;">09:56:36 AM 05/04/2021</div><div class="t" style="top:637px;font-size:10.0px;line-height:10.0px;font-weight:400;color:#363a40;left:694.90px;transform-origin:0 8px;transform:scale(1.0000,0.9100);-webkit-text-stroke:0.2px;">1s</div><div class="t" style="top:637px;font-size:10.0px;line-height:10.0px;font-weight:400;color:#363a40;right:120.00px;transform-origin:100% 8px;transform:scale(0.9700,0.9100);-webkit-text-stroke:0.2px;">918,843</div><div class="t" style="top:637px;font-size:10.0px;line-height:10.0px;font-weight:400;color:#363a40;left:838.71px;transform-origin:0 8px;transform:scale(0.9729,0.9100);-webkit-text-stroke:0.2px;">Success</div><div class="r" style="left:13px;top:652.54px;width:909px;height:1px;background:#eff0f2;"></div><div class="t" style="top:659px;font-size:10.0px;line-height:10.0px;font-weight:400;color:#1f3d7c;left:16.93px;transform-origin:0 8px;transform:scale(0.9300,0.9100);-webkit-text-stroke:0.2px;">Sales_Date_dim</div><div class="r" style="left:181.8px;top:657.46px;width:12.6px;height:12.6px;background:#f9f9f9;border:1px solid #cfd1d4;border-radius:2px;box-sizing:border-box;"></div><div class="t" style="top:659px;font-size:9.3px;line-height:9.3px;font-weight:400;color:#2a2d31;left:-12.00px;width:400px;text-align:center;transform-origin:50% 7px;-webkit-text-stroke:0.25px #2a2d31;">F</div><div class="t" style="top:659px;font-size:10.0px;line-height:10.0px;font-weight:400;color:#363a40;left:236.00px;transform-origin:0 8px;transform:scale(0.9964,0.9100);-webkit-text-stroke:0.2px;">09:56:17 AM 05/04/2021</div><div class="t" style="top:659px;font-size:10.0px;line-height:10.0px;font-weight:400;color:#363a40;left:365.50px;transform-origin:0 8px;transform:scale(1.0000,0.9100);-webkit-text-stroke:0.2px;">1s</div><div class="t" style="top:659px;font-size:10.0px;line-height:10.0px;font-weight:400;color:#363a40;right:432.80px;transform-origin:100% 8px;transform:scale(0.9700,0.9100);-webkit-text-stroke:0.2px;">4,017</div><div class="t" style="top:659px;font-size:10.0px;line-height:10.0px;font-weight:400;color:#363a40;right:377.00px;transform-origin:100% 8px;transform:scale(1.0000,0.9100);-webkit-text-stroke:0.2px;">0</div><div class="t" style="top:659px;font-size:10.0px;line-height:10.0px;font-weight:400;color:#363a40;left:565.90px;transform-origin:0 8px;transform:scale(0.9964,0.9100);-webkit-text-stroke:0.2px;">09:56:36 AM 05/04/2021</div><div class="t" style="top:659px;font-size:10.0px;line-height:10.0px;font-weight:400;color:#363a40;left:694.90px;transform-origin:0 8px;transform:scale(1.0000,0.9100);-webkit-text-stroke:0.2px;">1s</div><div class="t" style="top:659px;font-size:10.0px;line-height:10.0px;font-weight:400;color:#363a40;right:120.00px;transform-origin:100% 8px;transform:scale(0.9700,0.9100);-webkit-text-stroke:0.2px;">4,017</div><div class="t" style="top:659px;font-size:10.0px;line-height:10.0px;font-weight:400;color:#363a40;left:838.71px;transform-origin:0 8px;transform:scale(0.9729,0.9100);-webkit-text-stroke:0.2px;">Success</div><div class="r" style="left:13px;top:674.36px;width:909px;height:1px;background:#eff0f2;"></div><div class="t" style="top:681px;font-size:10.0px;line-height:10.0px;font-weight:400;color:#1f3d7c;left:16.93px;transform-origin:0 8px;transform:scale(0.9300,0.9100);-webkit-text-stroke:0.2px;">Target</div><div class="r" style="left:181.8px;top:679.2800000000001px;width:12.6px;height:12.6px;background:#f9f9f9;border:1px solid #cfd1d4;border-radius:2px;box-sizing:border-box;"></div><div class="t" style="top:681px;font-size:9.3px;line-height:9.3px;font-weight:400;color:#2a2d31;left:-12.00px;width:400px;text-align:center;transform-origin:50% 7px;-webkit-text-stroke:0.25px #2a2d31;">F</div><div class="t" style="top:681px;font-size:10.0px;line-height:10.0px;font-weight:400;color:#363a40;left:236.00px;transform-origin:0 8px;transform:scale(0.9964,0.9100);-webkit-text-stroke:0.2px;">09:56:17 AM 05/04/2021</div><div class="t" style="top:681px;font-size:10.0px;line-height:10.0px;font-weight:400;color:#363a40;left:365.50px;transform-origin:0 8px;transform:scale(1.0000,0.9100);-webkit-text-stroke:0.2px;">1s</div><div class="t" style="top:681px;font-size:10.0px;line-height:10.0px;font-weight:400;color:#363a40;right:432.80px;transform-origin:100% 8px;transform:scale(0.9700,0.9100);-webkit-text-stroke:0.2px;">220</div><div class="t" style="top:681px;font-size:10.0px;line-height:10.0px;font-weight:400;color:#363a40;right:377.00px;transform-origin:100% 8px;transform:scale(1.0000,0.9100);-webkit-text-stroke:0.2px;">0</div><div class="t" style="top:681px;font-size:10.0px;line-height:10.0px;font-weight:400;color:#363a40;left:565.90px;transform-origin:0 8px;transform:scale(0.9964,0.9100);-webkit-text-stroke:0.2px;">09:56:36 AM 05/04/2021</div><div class="t" style="top:681px;font-size:10.0px;line-height:10.0px;font-weight:400;color:#363a40;left:694.90px;transform-origin:0 8px;transform:scale(1.0000,0.9100);-webkit-text-stroke:0.2px;">1s</div><div class="t" style="top:681px;font-size:10.0px;line-height:10.0px;font-weight:400;color:#363a40;right:120.00px;transform-origin:100% 8px;transform:scale(0.9700,0.9100);-webkit-text-stroke:0.2px;">220</div><div class="t" style="top:681px;font-size:10.0px;line-height:10.0px;font-weight:400;color:#363a40;left:838.71px;transform-origin:0 8px;transform:scale(0.9729,0.9100);-webkit-text-stroke:0.2px;">Success</div><div class="r" style="left:13px;top:696.3px;width:909px;height:1.4px;background:#dbd9d5;"></div><svg class="r" style="left:0;top:0" width="936" height="702"><circle cx="829.50" cy="489.30" r="6.1" fill="none" stroke="#52c41a" stroke-width="1.2"/><path d="M826.80 489.40 L828.70 491.30 L832.30 487.50" fill="none" stroke="#52c41a" stroke-width="1.05"/><circle cx="829.50" cy="511.12" r="6.1" fill="none" stroke="#52c41a" stroke-width="1.2"/><path d="M826.80 511.22 L828.70 513.12 L832.30 509.32" fill="none" stroke="#52c41a" stroke-width="1.05"/><circle cx="829.50" cy="532.94" r="6.1" fill="none" stroke="#52c41a" stroke-width="1.2"/><path d="M826.80 533.04 L828.70 534.94 L832.30 531.14" fill="none" stroke="#52c41a" stroke-width="1.05"/><circle cx="829.50" cy="554.76" r="6.1" fill="none" stroke="#52c41a" stroke-width="1.2"/><path d="M826.80 554.86 L828.70 556.76 L832.30 552.96" fill="none" stroke="#52c41a" stroke-width="1.05"/><circle cx="829.50" cy="576.58" r="6.1" fill="none" stroke="#52c41a" stroke-width="1.2"/><path d="M826.80 576.68 L828.70 578.58 L832.30 574.78" fill="none" stroke="#52c41a" stroke-width="1.05"/><circle cx="829.50" cy="598.40" r="6.1" fill="none" stroke="#52c41a" stroke-width="1.2"/><path d="M826.80 598.50 L828.70 600.40 L832.30 596.60" fill="none" stroke="#52c41a" stroke-width="1.05"/><circle cx="829.50" cy="620.22" r="6.1" fill="none" stroke="#52c41a" stroke-width="1.2"/><path d="M826.80 620.32 L828.70 622.22 L832.30 618.42" fill="none" stroke="#52c41a" stroke-width="1.05"/><circle cx="829.50" cy="642.04" r="6.1" fill="none" stroke="#52c41a" stroke-width="1.2"/><path d="M826.80 642.14 L828.70 644.04 L832.30 640.24" fill="none" stroke="#52c41a" stroke-width="1.05"/><circle cx="829.50" cy="663.86" r="6.1" fill="none" stroke="#52c41a" stroke-width="1.2"/><path d="M826.80 663.96 L828.70 665.86 L832.30 662.06" fill="none" stroke="#52c41a" stroke-width="1.05"/><circle cx="829.50" cy="685.68" r="6.1" fill="none" stroke="#52c41a" stroke-width="1.2"/><path d="M826.80 685.78 L828.70 687.68 L832.30 683.88" fill="none" stroke="#52c41a" stroke-width="1.05"/></svg><div class="r" style="left:934.7px;top:38.6px;width:1.3px;height:652.4px;background:#161616;"></div><div class="r" style="left:934.7px;top:691px;width:1.3px;height:9.2px;background:#6a2a6e;"></div><div class="r" style="left:0px;top:700.2px;width:936px;height:1.8px;background:#0e0e0e;"></div>
</body></html>
